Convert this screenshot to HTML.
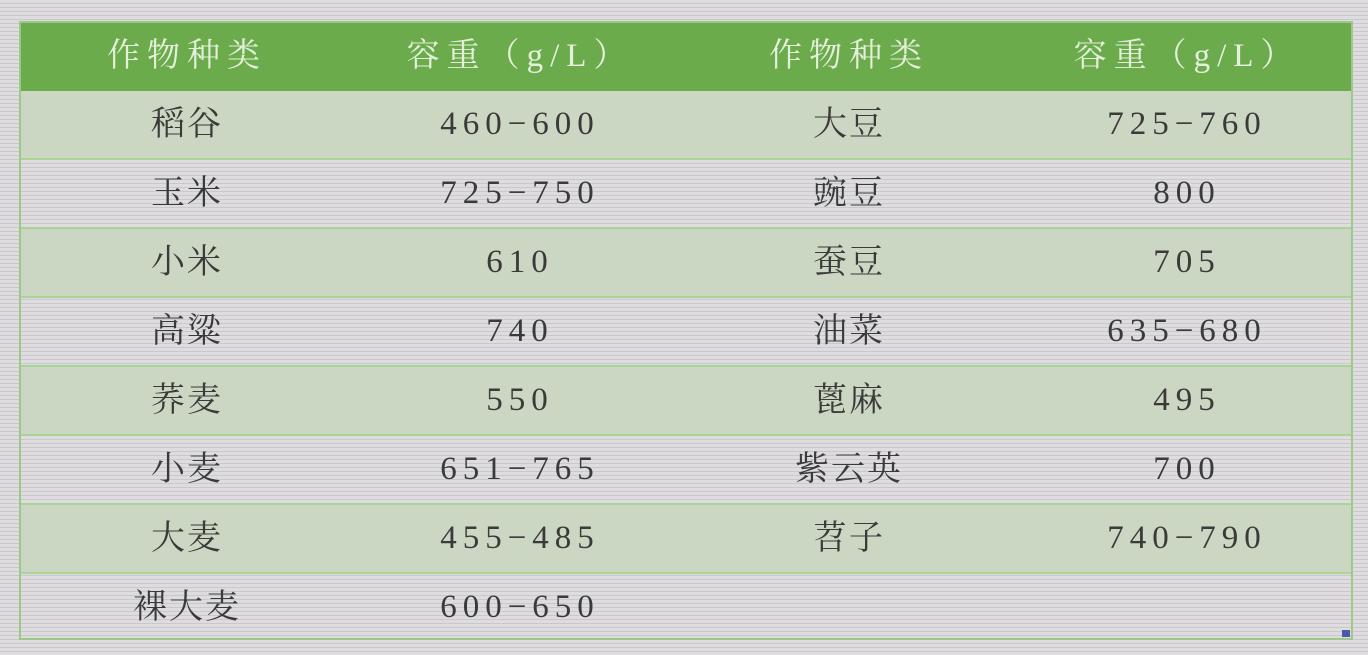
<!DOCTYPE html>
<html><head><meta charset="utf-8"><style>
html,body{margin:0;padding:0}
body{width:1368px;height:655px;overflow:hidden;position:relative;
background:repeating-linear-gradient(180deg,#dedcdf 0px,#dedcdf 3px,#c9c8cc 3px,#c9c8cc 4px);}
.t{position:absolute;left:19px;top:21px;width:1334px;height:619px;border:2px solid #9cc98a;box-sizing:border-box}
.r{position:absolute;left:0;width:1330px;height:69px;border-bottom:2px solid #a8d495;box-sizing:border-box}
.g{background:#cbd7c2}
.h{background:#6cab4c;border-bottom:none}
.c{position:absolute;top:0;height:67px;line-height:67px;text-align:center;transform:translateX(-50%);white-space:nowrap;
font-family:"Liberation Serif","Noto Serif CJK SC",serif;font-size:34px;color:#3a3a3a;letter-spacing:2px}
.n{letter-spacing:6px;font-size:33px}
.h .c{color:#e4f0dc;font-size:33px;letter-spacing:7px}
.corner{position:absolute;left:1342px;top:630px;width:8px;height:7px;background:#4a5aa8}
</style></head><body>
<div class="t">
<div class="r h" style="top:0"><div class="c" style="left:166px">作物种类</div><div class="c" style="left:499px">容重（g/L）</div><div class="c" style="left:828px">作物种类</div><div class="c" style="left:1166px">容重（g/L）</div></div>
<div class="r g" style="top:68px"><div class="c" style="left:166px">稻谷</div><div class="c n" style="left:499px">460−600</div><div class="c" style="left:828px">大豆</div><div class="c n" style="left:1166px">725−760</div></div>
<div class="r" style="top:137px"><div class="c" style="left:166px">玉米</div><div class="c n" style="left:499px">725−750</div><div class="c" style="left:828px">豌豆</div><div class="c n" style="left:1166px">800</div></div>
<div class="r g" style="top:206px"><div class="c" style="left:166px">小米</div><div class="c n" style="left:499px">610</div><div class="c" style="left:828px">蚕豆</div><div class="c n" style="left:1166px">705</div></div>
<div class="r" style="top:275px"><div class="c" style="left:166px">高粱</div><div class="c n" style="left:499px">740</div><div class="c" style="left:828px">油菜</div><div class="c n" style="left:1166px">635−680</div></div>
<div class="r g" style="top:344px"><div class="c" style="left:166px">荞麦</div><div class="c n" style="left:499px">550</div><div class="c" style="left:828px">蓖麻</div><div class="c n" style="left:1166px">495</div></div>
<div class="r" style="top:413px"><div class="c" style="left:166px">小麦</div><div class="c n" style="left:499px">651−765</div><div class="c" style="left:828px">紫云英</div><div class="c n" style="left:1166px">700</div></div>
<div class="r g" style="top:482px"><div class="c" style="left:166px">大麦</div><div class="c n" style="left:499px">455−485</div><div class="c" style="left:828px">苕子</div><div class="c n" style="left:1166px">740−790</div></div>
<div class="r" style="top:551px;border-bottom:none"><div class="c" style="left:166px">裸大麦</div><div class="c n" style="left:499px">600−650</div></div>
</div>
<div class="corner"></div>
</body></html>
